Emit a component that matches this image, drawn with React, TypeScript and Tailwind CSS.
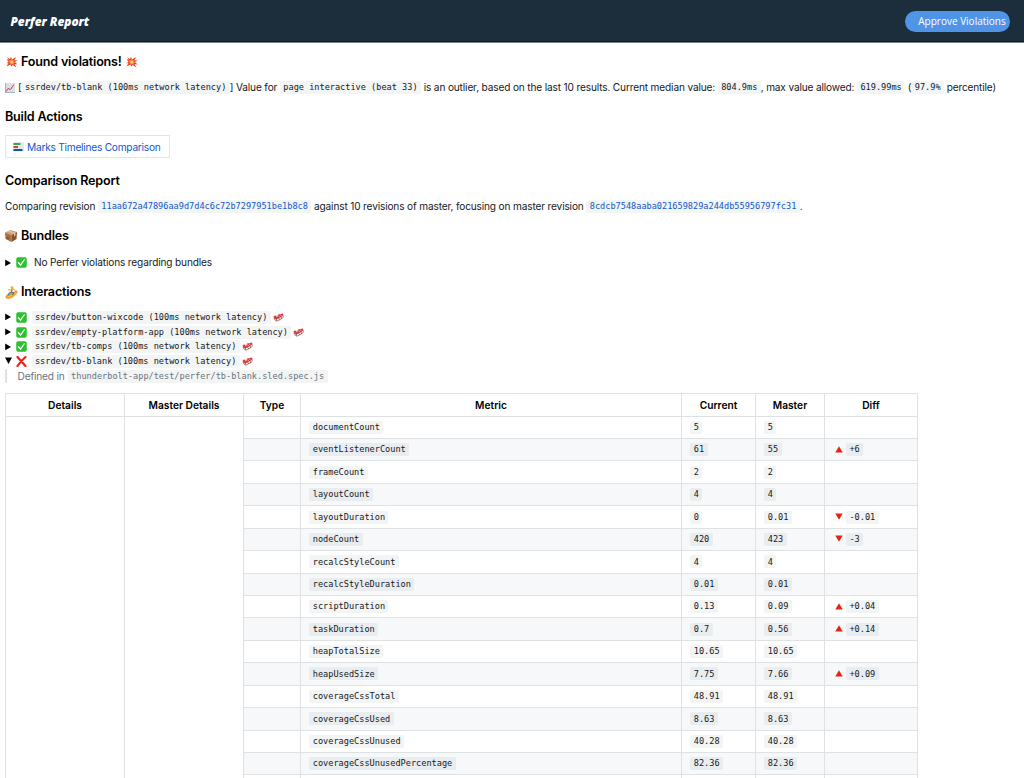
import type { ReactNode } from 'react';

interface CodeProps {
  children: ReactNode;
  className?: string;
}

const Code = ({ children, className = '' }: CodeProps) => (
  <code
    className={`inline-flex h-[13px] shrink-0 items-center rounded-[2px] bg-[#1b1f23]/5 px-[3.4px] font-['DejaVu_Sans_Mono','Liberation_Mono',monospace] text-[8.58px] leading-none tracking-normal whitespace-pre ${className}`}
  >
    {children}
  </code>
);

const BoomIcon = () => (
  <svg width="12" height="12" viewBox="0 0 24 24" className="shrink-0">
    <path
      d="M1 2l7 4 2-4 2 5 8-5-3 7 6-1-5 4 5 5-6-1 4 7-8-5-2 3-2-4-8 4 4-7-4 1 4-4-4-4 5 0z"
      fill="#e8432a"
    />
    <path d="M6 7l4 2 2-3 1 3 4-1-2 3 3 2-3 1 1 4-4-3-2 3-1-4-4 1 3-3-3-2 3-1z" fill="#ff9a3c" />
    <path d="M9 10l3 0 2 0-1 2 1 3-3-1-2 1 1-3z" fill="#ffe08a" />
  </svg>
);

const ChartIcon = () => (
  <svg width="10" height="10" viewBox="0 0 20 20" className="shrink-0">
    <rect width="20" height="20" rx="1" fill="#dde7ed" />
    <path d="M5 0v20M10 0v20M15 0v20M0 5h20M0 10h20M0 15h20" stroke="#c6d5de" strokeWidth="1" />
    <path d="M1 0v19h19" stroke="#9db2bf" strokeWidth="2" fill="none" />
    <path d="M2 17l4-6 5 2 7-10" stroke="#c8434c" strokeWidth="2" fill="none" />
  </svg>
);

const TimelineIcon = () => (
  <svg width="11" height="10" viewBox="0 0 22 20" className="shrink-0">
    <rect width="22" height="19" rx="1" fill="#e4ebef" />
    <path d="M1 4h14" stroke="#35a853" strokeWidth="4" />
    <path d="M1 10h9" stroke="#e23b3b" strokeWidth="4" />
    <path d="M1 16h18" stroke="#1c4f9c" strokeWidth="4" />
  </svg>
);

const BoxIcon = () => (
  <svg width="12" height="12" viewBox="0 0 24 24" className="shrink-0">
    <path d="M0 5l11-5 13 4-11 6z" fill="#cf9f70" />
    <path d="M0 5l13 5v14L1 18z" fill="#a86f42" />
    <path d="M24 4l-11 6v14l10-6z" fill="#86532d" />
    <path d="M5 3l13 5v5l3-2V6L9 1z" fill="#e2c39e" />
    <path d="M3 15l5 2" stroke="#6f4323" strokeWidth="2" />
  </svg>
);

const SurferIcon = () => (
  <svg width="13" height="13" viewBox="0 0 26 26" className="shrink-0">
    <path d="M1 22c0-5 8-7 13-9 5-2 10-6 11-3 1 5-8 13-15 15-3 1-9 1-9-3z" fill="#f59a22" />
    <path d="M5 22c6-1 13-5 17-9" stroke="#ffd15c" strokeWidth="1.5" fill="none" />
    <path d="M6 7l6 1 5-2 4 3" stroke="#f6b73c" strokeWidth="2.5" fill="none" />
    <path d="M14 7l-1 5-4 2-3 4M13 12l4 2-2 4" stroke="#4f7d92" strokeWidth="2.5" fill="none" />
    <circle cx="14" cy="3.5" r="2.8" fill="#eeb13c" />
  </svg>
);

const CheckIcon = () => (
  <svg width="11" height="11" viewBox="0 0 22 22" className="shrink-0">
    <rect x="0.5" y="0.5" width="21" height="21" rx="3.5" fill="#2cc02f" />
    <path d="M5 11.5l4 5 7.500-11" stroke="#fff" strokeWidth="2.6" fill="none" strokeLinecap="round" />
  </svg>
);

const CrossIcon = () => (
  <svg width="11" height="11" viewBox="0 0 22 22" className="shrink-0">
    <path d="M3 2q6 7 16 18M19 2Q9 11 3 20" stroke="#f0231b" strokeWidth="4.5" fill="none" strokeLinecap="round" />
  </svg>
);

const SledIcon = () => (
  <svg width="11" height="9" viewBox="0 0 22 18" className="shrink-0">
    <path d="M1 6l5-1 2 4 2-6 10-2 1 4-5 3-9 5-4-1z" fill="#d93d3d" />
    <path d="M2 9c1 5 3 8 7 7l9-5c3-2 3-4 2-6" stroke="#c4565b" strokeWidth="1.6" fill="none" />
    <path d="M6 11l2 5M11 9l2 5M16 7l1 5" stroke="#75454d" strokeWidth="1.5" fill="none" />
    <path d="M11 5l2 3M15 3l1 3" stroke="#fff" strokeWidth="1" />
  </svg>
);

const Marker = ({ open = false }: { open?: boolean }) => (
  <svg width="7" height="8" viewBox="0 0 7 8" className="mr-[3.5px] shrink-0 fill-black">
    {open ? <path d="M0 0.500h7L3.5 7z" /> : <path d="M0.2 0.5v6.800l5.800-3.400z" />}
  </svg>
);

const DiffIcon = ({ up }: { up: boolean }) => (
  <svg width="8" height="8" viewBox="0 0 8 8" className="mr-[3px] shrink-0">
    {up ? <path d="M4 0.3L7.7 6.5H0.3z" fill="#e9220f" /> : <path d="M0.3 0.5h7.400L4 6.7z" fill="#e9220f" />}
  </svg>
);

const Heading = ({ children, className = '' }: CodeProps) => (
  <h3
    className={`flex h-[20px] items-center text-[12.6px] font-semibold tracking-[-0.2px] whitespace-pre text-black ${className}`}
  >
    {children}
  </h3>
);

const interactions = [
  { name: 'ssrdev/button-wixcode (100ms network latency)', ok: true },
  { name: 'ssrdev/empty-platform-app (100ms network latency)', ok: true },
  { name: 'ssrdev/tb-comps (100ms network latency)', ok: true },
  { name: 'ssrdev/tb-blank (100ms network latency)', ok: false },
];

const metrics = [
  { name: 'documentCount', current: '5', master: '5' },
  { name: 'eventListenerCount', current: '61', master: '55', diff: '+6' },
  { name: 'frameCount', current: '2', master: '2' },
  { name: 'layoutCount', current: '4', master: '4' },
  { name: 'layoutDuration', current: '0', master: '0.01', diff: '-0.01' },
  { name: 'nodeCount', current: '420', master: '423', diff: '-3' },
  { name: 'recalcStyleCount', current: '4', master: '4' },
  { name: 'recalcStyleDuration', current: '0.01', master: '0.01' },
  { name: 'scriptDuration', current: '0.13', master: '0.09', diff: '+0.04' },
  { name: 'taskDuration', current: '0.7', master: '0.56', diff: '+0.14' },
  { name: 'heapTotalSize', current: '10.65', master: '10.65' },
  { name: 'heapUsedSize', current: '7.75', master: '7.66', diff: '+0.09' },
  { name: 'coverageCssTotal', current: '48.91', master: '48.91' },
  { name: 'coverageCssUsed', current: '8.63', master: '8.63' },
  { name: 'coverageCssUnused', current: '40.28', master: '40.28' },
  { name: 'coverageCssUnusedPercentage', current: '82.36', master: '82.36' },
];

const columns = 'grid grid-cols-[57px_381px_74px_69px_93px]';
const cell = 'flex items-center border-r border-[#dfe2e5] pl-[8.4px]';
const headCell = 'flex items-center justify-center border-r border-[#dfe2e5]';

const MetricsTable = () => (
  <div className="mt-[9.7px] flex w-[913px] border-t border-l border-[#dfe2e5] tracking-normal">
    {['Details', 'Master Details'].map((title) => (
      <div key={title} className="w-[119px] border-r border-[#dfe2e5]">
        <div className="flex h-[22.5px] items-center justify-center border-b border-[#dfe2e5] text-[10.2px] font-semibold text-black">
          {title}
        </div>
      </div>
    ))}
    <div>
      <div className={`${columns} h-[22.5px] border-b border-[#dfe2e5] text-[10.2px] font-semibold text-black`}>
        {['Type', 'Metric', 'Current', 'Master', 'Diff'].map((title) => (
          <div key={title} className={headCell}>{title}</div>
        ))}
      </div>
      {metrics.map((row) => (
        <div key={row.name} className={`${columns} h-[22.43px] border-b border-[#dfe2e5] even:bg-white odd:bg-[#f6f8fa]`}>
          <div className={cell} />
          <div className={cell}><Code>{row.name}</Code></div>
          <div className={cell}><Code>{row.current}</Code></div>
          <div className={cell}><Code>{row.master}</Code></div>
          <div className={`${cell} pl-[10px]`}>
            {row.diff && (
              <>
                <DiffIcon up={row.diff.startsWith('+')} />
                <Code>{row.diff}</Code>
              </>
            )}
          </div>
        </div>
      ))}
      <div className={`${columns} h-[22.43px]`}>
        {[0, 1, 2, 3, 4].map((i) => (
          <div key={i} className={`${cell} bg-white`} />
        ))}
      </div>
    </div>
  </div>
);

export default function App() {
  return (
    <div className="h-[778px] w-[1024px] overflow-hidden bg-white font-['Inter','Liberation_Sans',sans-serif] text-[10.1px] leading-none tracking-[-0.145px] text-[#15191e]">
      <header className="flex h-[43px] items-center justify-between border-b border-[#7b8791] bg-[#1c2d3b] pr-[14px] pl-[10.5px] tracking-normal text-white shadow-[inset_0_-1px_0_#0b1722]">
        <h1 className="pt-px font-['Open_Sans',sans-serif] text-[11.8px] font-extrabold whitespace-nowrap italic">Perfer Report</h1>
        <button className="h-[21px] w-[105px] rounded-full bg-[#5094e6] pl-[9px] font-['Open_Sans',sans-serif] text-[10px] font-medium whitespace-nowrap">
          Approve Violations
        </button>
      </header>

      <main className="pl-[5px]">
        <Heading className="mt-[9px]">
          <span className="ml-[1px]"><BoomIcon /></span>
          <span className="mr-[4px] ml-[3px]">Found violations!</span>
          <BoomIcon />
        </Heading>
        <p className="mt-[8px] flex h-[15px] items-center whitespace-pre">
          <ChartIcon />
          <span className="ml-[3px]">[</span>
          <Code>ssrdev/tb-blank (100ms network latency)</Code>
          <span>] Value for </span>
          <Code>page interactive (beat 33)</Code>
          <span> is an outlier, based on the last 10 results. Current median value: </span>
          <Code>804.9ms</Code>
          <span>, max value allowed: </span>
          <Code>619.99ms</Code>
          <span> (</span>
          <Code>97.9%</Code>
          <span> percentile)</span>
        </p>

        <Heading className="mt-[12px]">Build Actions</Heading>
        <a className="mt-[8px] flex h-[23px] w-[165px] items-center border border-[#dfe5e8] pl-[7px] text-[10.2px] tracking-[-0.26px] whitespace-nowrap text-[#1259cc]">
          <TimelineIcon />
          <span className="ml-[3px] pt-px">Marks Timelines Comparison</span>
        </a>

        <Heading className="mt-[13px]">Comparison Report</Heading>
        <p className="mt-[8px] flex h-[15px] items-center whitespace-pre">
          <span>Comparing revision </span>
          <Code className="text-[#1259cc]">11aa672a47896aa9d7d4c6c72b7297951be1b8c8</Code>
          <span> against 10 revisions of master, focusing on master revision </span>
          <Code className="text-[#1259cc]">8cdcb7548aaba021659829a244db55956797fc31</Code>
          <span>.</span>
        </p>

        <Heading className="mt-[12px]">
          <BoxIcon />
          <span className="ml-[4px]">Bundles</span>
        </Heading>
        <div className="mt-[9px] flex h-[15px] items-center">
          <Marker />
          <CheckIcon />
          <span className="ml-[7.5px] whitespace-nowrap">No Perfer violations regarding bundles</span>
        </div>

        <Heading className="mt-[12px]">
          <SurferIcon />
          <span className="ml-[3px]">Interactions</span>
        </Heading>
        <ul className="mt-[8px]">
          {interactions.map((item) => (
            <li key={item.name} className="flex h-[14.7px] items-center">
              <Marker open={!item.ok} />
              {item.ok ? <CheckIcon /> : <CrossIcon />}
              <Code className="mr-[2px] ml-[5px]">{item.name}</Code>
              <SledIcon />
            </li>
          ))}
        </ul>
        <blockquote className="flex h-[14.7px] items-center border-l-2 border-[#dfe2e5] pl-[10.5px] text-[#6a737d]">
          <span className="mr-[3px]">Defined in</span>
          <Code>thunderbolt-app/test/perfer/tb-blank.sled.spec.js</Code>
        </blockquote>

        <MetricsTable />
      </main>
    </div>
  );
}
